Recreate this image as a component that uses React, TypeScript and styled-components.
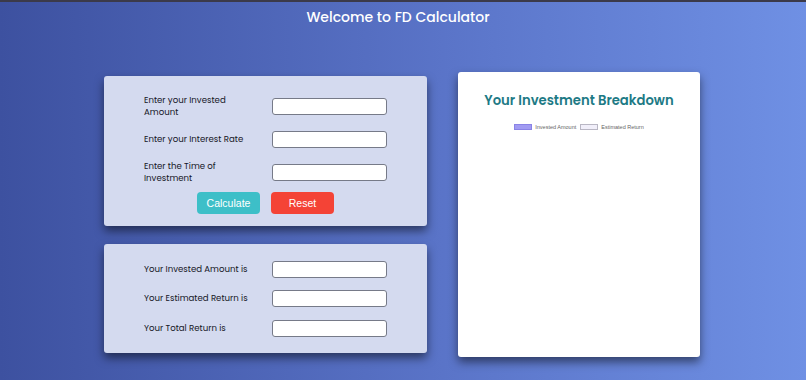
import React from "react";
import styled, { createGlobalStyle } from "styled-components";

const GlobalStyle = createGlobalStyle`
  body {
    margin: 0;
    font-family: "Poppins", "Open Sans", "Noto Sans", sans-serif;
  }
`;

export const Page = styled.div`
  min-height: 100vh;
  box-sizing: border-box;
  border-top: 2px solid #3b3a4a;
  padding-right: 10px;
  background: linear-gradient(90deg, #3d51a0 0%, #5a74c8 55%, #6f90e4 100%);
`;

export const Title = styled.h1`
  margin: 0;
  padding-top: 6px;
  text-align: center;
  color: #ffffff;
  font-size: 14px;
  font-weight: 500;
  line-height: 18px;
`;

export const Layout = styled.div`
  display: flex;
  align-items: center;
  gap: 31px;
  margin-top: 46px;
  padding-left: 104px;
`;

export const Column = styled.div`
  display: flex;
  flex-direction: column;
  gap: 18px;
`;

export const Card = styled.div<{ $pad: string }>`
  width: 323px;
  box-sizing: border-box;
  padding: ${(p) => p.$pad};
  background: #d4daef;
  border-radius: 3px;
  box-shadow: 0 5px 10px rgba(0, 0, 0, 0.5);
`;

export const Fields = styled.div<{ $gap: number }>`
  display: grid;
  grid-template-columns: 128px 115px;
  row-gap: ${(p) => p.$gap}px;
  align-items: center;
`;

export const Label = styled.label`
  font-size: 8.6px;
  line-height: 12.5px;
  color: #15161f;
`;

export const Field = styled.input`
  width: 115px;
  height: 17px;
  box-sizing: border-box;
  border: 1px solid #767a88;
  border-radius: 3px;
  background: #ffffff;
`;

export const Buttons = styled.div`
  display: flex;
  justify-content: center;
  gap: 11px;
  margin-top: 7.5px;
`;

export const Button = styled.button<{ $bg: string }>`
  width: 63px;
  height: 22px;
  border: none;
  border-radius: 4px;
  background: ${(p) => p.$bg};
  color: #ffffff;
  font-family: "Liberation Sans", Arial, sans-serif;
  font-size: 10.5px;
  cursor: pointer;
`;

export const ChartCard = styled.div`
  width: 242px;
  height: 285px;
  box-sizing: border-box;
  padding-top: 19px;
  background: #ffffff;
  border-radius: 3px;
  box-shadow: 0 5px 10px rgba(0, 0, 0, 0.5);
`;

export const ChartTitle = styled.h2`
  margin: 0;
  text-align: center;
  color: #1d7a85;
  font-size: 13.2px;
  font-weight: 600;
  line-height: 20px;
`;

export const Legend = styled.div`
  display: flex;
  justify-content: center;
  gap: 4px;
  margin-top: 13px;
`;

export const LegendItem = styled.div`
  display: flex;
  align-items: center;
  gap: 3px;
  font-family: "Liberation Sans", Arial, sans-serif;
  font-size: 5.5px;
  color: #666666;
`;

export const Swatch = styled.span<{ $fill: string; $line: string }>`
  width: 18px;
  height: 6px;
  box-sizing: border-box;
  background: ${(p) => p.$fill};
  border: 1px solid ${(p) => p.$line};
`;

const inputs: React.ReactNode[] = [
  <>
    Enter your Invested
    <br />
    Amount
  </>,
  "Enter your Interest Rate",
  <>
    Enter the Time of
    <br />
    Investment
  </>,
];

const results = [
  "Your Invested Amount is",
  "Your Estimated Return is",
  "Your Total Return is",
];

const App: React.FC = () => {
  return (
    <>
      <GlobalStyle />
      <Page>
        <Title>Welcome to FD Calculator</Title>
        <Layout>
          <Column>
            <Card $pad="17.5px 40px 12px">
              <Fields $gap={12}>
                {inputs.map((t, i) => (
                  <React.Fragment key={i}>
                    <Label>{t}</Label>
                    <Field type="text" />
                  </React.Fragment>
                ))}
              </Fields>
              <Buttons>
                <Button $bg="#3dbfc8">Calculate</Button>
                <Button $bg="#f44336">Reset</Button>
              </Buttons>
            </Card>
            <Card $pad="16.5px 40px">
              <Fields $gap={12.5}>
                {results.map((t) => (
                  <React.Fragment key={t}>
                    <Label>{t}</Label>
                    <Field type="text" readOnly />
                  </React.Fragment>
                ))}
              </Fields>
            </Card>
          </Column>
          <ChartCard>
            <ChartTitle>Your Investment Breakdown</ChartTitle>
            <Legend>
              <LegendItem>
                <Swatch $fill="#a19bf2" $line="#8a83e6" />
                Invested Amount
              </LegendItem>
              <LegendItem>
                <Swatch $fill="#f1effa" $line="#b9b7c4" />
                Estimated Return
              </LegendItem>
            </Legend>
          </ChartCard>
        </Layout>
      </Page>
    </>
  );
};

export default App;
